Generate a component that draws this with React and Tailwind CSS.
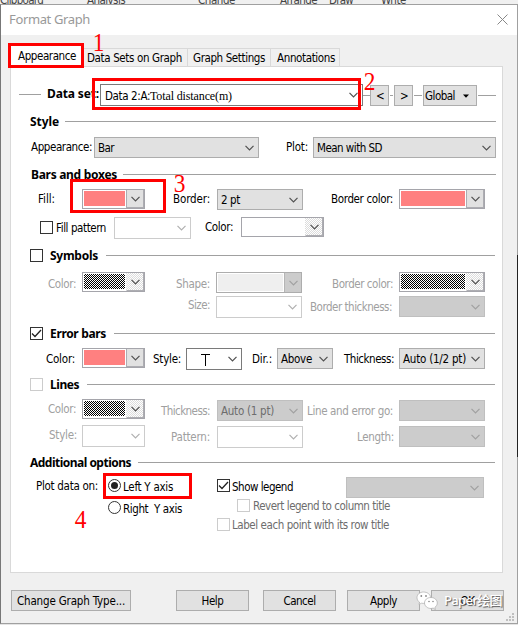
import { useLayoutEffect, useRef } from "react";

// Single-line label whose tracking is tuned so it fills the given width.
function T({ w, children, className = "" }) {
  const ref = useRef(null);
  useLayoutEffect(() => {
    const el = ref.current;
    el.style.letterSpacing = "0px";
    const natural = el.getBoundingClientRect().width;
    el.style.letterSpacing = (w - natural) / el.textContent.length + "px";
  }, [w, children]);
  return (
    <span className={"block h-[21px] shrink-0 leading-[21px] " + className} style={{ width: w }}>
      <span ref={ref} className="inline-block whitespace-pre">{children}</span>
    </span>
  );
}

// Bold section caption.
function Heading({ className = "", ...rest }) {
  return <T className={"font-['Noto_Sans',sans-serif] text-[12px] font-bold [font-stretch:normal] " + className} {...rest} />;
}

function Chevron({ className = "" }) {
  return (
    <svg width="9" height="6" viewBox="0 0 9 6" className={"shrink-0 " + className} fill="none" stroke="currentColor" strokeWidth="1.2">
      <path d="M.5 .8 4.5 4.8 8.5 .8" />
    </svg>
  );
}

const looks = {
  normal: "h-[21px] border-[#adadad] bg-[#e1e1e1] text-[#505050]",
  off: "h-[21px] border-[#bfbfbf] bg-[#cccccc] text-[#a0a0a0]",
  edit: "h-[22px] border-[#7a7a7a] bg-white text-[#505050]",
  editOff: "h-[22px] border-[#cccccc] bg-white text-[#b0b0b0]",
};

function Select({ look = "normal", className = "", children }) {
  return (
    <div className={"flex shrink-0 items-center justify-between border pr-1 pl-[3px] " + looks[look] + " " + className}>
      <div className="mt-[2px]">{children}</div>
      <Chevron />
    </div>
  );
}

const dither =
  "bg-[repeating-conic-gradient(#000_0_25%,#fff_0_50%)] bg-size-[2px_2px]";
const paleDither =
  "bg-[repeating-conic-gradient(#dcdcdc_0_25%,#fff_0_50%)] bg-size-[2px_2px]";

function Swatch({ className = "", fill = "bg-[#ff8080]", off = false }) {
  return (
    <div className={"flex h-5 shrink-0 border border-[#a5a5ab] bg-white " + className}>
      <div className={"m-px mb-[2px] flex-1 " + fill} />
      <div
        className={
          "flex w-[18px] items-center justify-center border-r border-b border-l border-[#adadb2] text-[#505050] " +
          (off ? "border-l-transparent " + paleDither : "bg-[#e1e1e1]")
        }
      >
        <Chevron />
      </div>
    </div>
  );
}

function Check({ on = false, off = false, className = "" }) {
  return (
    <div className={"h-[13px] w-[13px] shrink-0 border bg-white " + (off ? "border-[#cccccc] " : "border-[#333] ") + className}>
      {on && (
        <svg width="11" height="11" viewBox="0 0 11 11" fill="none" stroke="#222" strokeWidth="1.3">
          <path d="M1 5.5 4 8.5 10 2" />
        </svg>
      )}
    </div>
  );
}

function Radio({ on = false, className = "" }) {
  return (
    <div className={"flex h-[13px] w-[13px] shrink-0 items-center justify-center rounded-full border border-[#333] bg-white " + className}>
      {on && <div className="h-[7px] w-[7px] rounded-full bg-[#222]" />}
    </div>
  );
}

const Rule = ({ className }) => <div className={"h-px shrink-0 bg-[#a0a0a0] " + className} />;

function Button({ className = "", w, children }) {
  return (
    <button className={"flex h-[21px] shrink-0 items-center justify-center border border-[#adadad] bg-[#e1e1e1] " + className}>
      <T w={w} className="mt-[2px]">{children}</T>
    </button>
  );
}

const Digit = ({ className, children }) => (
  <div className={"absolute origin-center scale-x-90 font-['Liberation_Serif',serif] text-[26px] leading-[26px] text-[#ff0000] [font-stretch:normal] " + className}>{children}</div>
);

const gray = "text-[#a0a0a0]";

export default function App() {
  return (
    <div className="relative flex h-[625px] w-[518px] flex-col overflow-hidden bg-[#e4e4e4] font-['DejaVu_Sans_Condensed','DejaVu_Sans',sans-serif] text-[11.5px] text-black [font-stretch:condensed]">
      {/* Ribbon showing behind the dialog */}
      <div className="flex h-1 shrink-0 overflow-hidden bg-[#f0f0f0] text-[#444]">
        <T w={43} className="-mt-[10px]">Clipboard</T>
        <T w={38} className="-mt-[10px] ml-[44px]">Analysis</T>
        <T w={37} className="-mt-[10px] ml-[73px]">Change</T>
        <T w={37} className="-mt-[10px] ml-[45px]">Arrange</T>
        <T w={24} className="-mt-[10px] ml-[12px]">Draw</T>
        <T w={25} className="-mt-[10px] ml-[28px]">Write</T>
      </div>

      <div className="flex h-[620px] shrink-0 flex-col border border-[#a0a0a0] border-l-[#777] bg-[#f0f0f0]">
        <div className="flex h-[30px] shrink-0 justify-between bg-white">
          <T w={81} className="mt-[4px] ml-[8px] font-['Noto_Sans',sans-serif] text-[13px] text-[#999] [font-stretch:normal]">Format Graph</T>
          <svg width="11" height="11" viewBox="0 0 11 11" className="mt-[9px] mr-[9px]" stroke="#888" strokeWidth="1">
            <path d="M.5 .5 10.5 10.5M10.5 .5 .5 10.5" />
          </svg>
        </div>

        {/* Tabs */}
        <div className="flex h-[31px] shrink-0 items-end pl-[9px]">
          <div className="h-[22px] w-[74px] bg-white pl-[8px]"><T w={58} className="mt-[2px]">Appearance</T></div>
          <div className="h-[18px] w-[104px] border-t border-r border-[#d9d9d9] pl-[3px]"><T w={95} className="-mt-px">Data Sets on Graph</T></div>
          <div className="h-[18px] w-[83px] border-t border-r border-[#d9d9d9] pl-[5px]"><T w={72} className="-mt-px">Graph Settings</T></div>
          <div className="h-[18px] w-[69px] border-t border-r border-[#d9d9d9] pl-[6px]"><T w={58} className="-mt-px">Annotations</T></div>
        </div>

        <div className="ml-[9px] h-[507px] w-[493px] shrink-0 border border-[#d9d9d9] bg-white">
          {/* Data set */}
          <div className="mt-[17px] flex h-[27px]">
            <Rule className="mt-[10px] ml-[8px] w-[22px]" />
            <Heading w={52} className="ml-[6px] -mt-px">Data set:</Heading>
            <Select look="edit" className="ml-px w-[263px]">
              <div className="flex text-black">
                <T w={45} className="ml-px">Data 2:A:</T>
                <T w={82} className="font-['Liberation_Serif',serif] text-[12px] [font-stretch:normal]">Total distance(m)</T>
              </div>
            </Select>
            <Rule className="mt-[11px] w-[7px]" />
            <Button w={7} className="mt-px w-[19px]">&lt;</Button>
            <Rule className="mt-[11px] ml-px w-[3px]" />
            <Button w={7} className="mt-px ml-px w-[19px]">&gt;</Button>
            <Rule className="mt-[11px] ml-px w-[8px]" />
            <button className="mt-px ml-px flex h-[21px] w-[54px] shrink-0 items-center border border-[#adadad] bg-[#e1e1e1] pl-px">
              <T w={30} className="mt-[2px]">Global</T>
              <svg width="6" height="4" className="ml-[8px]"><path d="M0 .5H6L3 3.8Z" /></svg>
            </button>
            <Rule className="mt-[11px] ml-px w-[18px]" />
          </div>

          {/* Style */}
          <div className="flex h-[26px] items-start">
            <Heading w={29} className="ml-[19px]">Style</Heading>
            <Rule className="mt-[10px] ml-[6px] w-[431px]" />
          </div>
          <div className="flex h-[27px]">
            <T w={61} className="ml-[20px]">Appearance:</T>
            <Select className="ml-[2px] w-[165px]"><T w={16} className="text-black">Bar</T></Select>
            <T w={22} className="ml-[27px]">Plot:</T>
            <Select className="ml-[5px] w-[183px]"><T w={65} className="text-black">Mean with SD</T></Select>
          </div>

          {/* Bars and boxes */}
          <div className="flex h-[25px]">
            <Heading w={86} className="ml-[20px]">Bars and boxes</Heading>
            <Rule className="mt-[10px] ml-[6px] w-[373px]" />
          </div>
          <div className="flex h-[28px]">
            <T w={17} className="ml-[27px]">Fill:</T>
            <Swatch className="ml-[27px] w-[63px]" />
            <T w={37} className="ml-[28px]">Border:</T>
            <Select className="ml-[7px] w-[86px]"><T w={19} className="text-black">2 pt</T></Select>
            <T w={62} className="ml-[28px]">Border color:</T>
            <Swatch className="ml-[6px] w-[86px]" />
          </div>
          <div className="flex h-[28px]">
            <Check className="mt-[4px] ml-[29px]" />
            <T w={50} className="mt-px ml-[3px]">Fill pattern</T>
            <Select look="editOff" className="ml-[8px] w-[77px]" />
            <T w={28} className="ml-[14px]">Color:</T>
            <Swatch fill="bg-white" off className="ml-[8px] w-[83px]" />
          </div>

          {/* Symbols */}
          <div className="flex h-[27px]">
            <Check className="mt-[4px] ml-[19px]" />
            <Heading w={48} className="ml-[7px]">Symbols</Heading>
            <Rule className="mt-[10px] ml-[8px] w-[389px]" />
          </div>
          <div className={"flex h-[24px] " + gray}>
            <T w={28} className="mt-[2px] ml-[37px]">Color:</T>
            <Swatch fill={dither} off className="ml-[6px] w-[63px]" />
            <T w={34} className="mt-[2px] ml-[31px]">Shape:</T>
            <div className="ml-[6px] flex h-[21px] w-[86px] shrink-0 border border-[#adadad]">
              <div className="m-px flex-1 bg-[#efefef]" />
              <div className="flex w-[17px] items-center justify-center border-l border-[#b5b5b5] bg-[#cccccc]"><Chevron /></div>
            </div>
            <T w={61} className="mt-[2px] ml-[30px]">Border color:</T>
            <Swatch fill={dither} off className="ml-[6px] w-[86px]" />
          </div>
          <div className={"flex h-[31px] " + gray}>
            <T w={22} className="-mt-px ml-[177px]">Size:</T>
            <Select look="editOff" className="ml-[6px] w-[86px]" />
            <T w={82} className="mt-px ml-[8px]">Border thickness:</T>
            <Select look="off" className="ml-[7px] w-[86px]" />
          </div>

          {/* Error bars */}
          <div className="flex h-[21px]">
            <Check on className="ml-[19px]" />
            <Heading w={56} className="-mt-[4px] ml-[7px]">Error bars</Heading>
            <Rule className="mt-[6px] ml-[8px] w-[381px]" />
          </div>
          <div className="flex h-[30px]">
            <T w={29} className="mt-px ml-[35px]">Color:</T>
            <Swatch className="ml-[7px] w-[63px]" />
            <T w={28} className="mt-px ml-[8px]">Style:</T>
            <Select look="edit" className="ml-[5px] w-[56px]">
              <svg width="10" height="14" className="-mt-px ml-[10px]" stroke="#000"><path d="M1 1.5H10M5.5 1.5V13" /></svg>
            </Select>
            <T w={20} className="mt-px ml-[10px]">Dir.:</T>
            <Select className="ml-[5px] w-[56px]"><T w={31} className="text-black">Above</T></Select>
            <T w={50} className="mt-px ml-[11px]">Thickness:</T>
            <Select className="ml-[5px] w-[86px]"><T w={63} className="text-black">Auto (1/2 pt)</T></Select>
          </div>

          {/* Lines */}
          <div className="flex h-[21px]">
            <Check off className="ml-[19px]" />
            <Heading w={29} className="-mt-[4px] ml-[7px]">Lines</Heading>
            <Rule className="mt-[6px] ml-[8px] w-[408px]" />
          </div>
          <div className={"flex h-[26px] " + gray}>
            <T w={28} className="ml-[37px]">Color:</T>
            <Swatch fill={dither} off className="ml-[6px] w-[63px]" />
            <T w={49} className="mt-[2px] ml-[16px]">Thickness:</T>
            <Select look="off" className="mt-px ml-[7px] w-[86px]"><T w={53} className="text-[#6d6d6d]">Auto (1 pt)</T></Select>
            <T w={86} className="mt-[2px] ml-[4px]">Line and error go:</T>
            <Select look="off" className="mt-px ml-[6px] w-[86px]" />
          </div>
          <div className={"flex h-[27px] " + gray}>
            <T w={28} className="ml-[38px]">Style:</T>
            <Select look="editOff" className="ml-[5px] w-[63px]" />
            <T w={39} className="mt-[2px] ml-[26px]">Pattern:</T>
            <Select look="editOff" className="mt-px ml-[7px] w-[86px]" />
            <T w={37} className="mt-[2px] ml-[54px]">Length:</T>
            <Select look="off" className="mt-px ml-[5px] w-[86px]" />
          </div>

          {/* Additional options */}
          <div className="flex h-[25px]">
            <Heading w={101} className="ml-[19px]">Additional options</Heading>
            <Rule className="mt-[10px] ml-[7px] w-[357px]" />
          </div>
          <div className="flex h-[22px]">
            <T w={62} className="-mt-px ml-[25px]">Plot data on:</T>
            <Radio on className="mt-[2px] ml-[10px]" />
            <T w={50} className="ml-[2px]">Left Y axis</T>
            <Check on className="mt-[2px] ml-[44px]" />
            <T w={61} className="ml-[2px]">Show legend</T>
            <Select look="off" className="ml-[53px] w-[138px]" />
          </div>
          <div className="flex h-[19px]">
            <Radio className="mt-[2px] ml-[97px]" />
            <T w={59} className="ml-[2px]">{"Right  Y axis"}</T>
            <Check off className="ml-[55px]" />
            <T w={137} className="-mt-[3px] ml-[3px] text-[#6d6d6d]">Revert legend to column title</T>
          </div>
          <div className="flex">
            <Check off className="ml-[206px]" />
            <T w={157} className="-mt-[3px] ml-[2px] text-[#6d6d6d]">Label each point with its row title</T>
          </div>
        </div>

        {/* Footer buttons */}
        <div className="mt-[17px] flex pl-[10px]">
          <Button w={108} className="w-[120px]">Change Graph Type...</Button>
          <Button w={22} className="ml-[45px] w-[73px]">Help</Button>
          <Button w={32} className="ml-[14px] w-[73px]">Cancel</Button>
          <Button w={27} className="ml-[11px] w-[73px]">Apply</Button>
          <Button w={14} className="ml-[11px] w-[73px]">OK</Button>
        </div>
      </div>

      {/* Window edge beside the dialog */}
      <div className="absolute top-[255px] right-0 h-[202px] w-px bg-[#222]" />

      {/* Resize grip */}
      <svg width="10" height="10" className="absolute top-[612px] left-[505px]" fill="#bfbfbf">
        <path d="M7 1h2v2H7zM4 4h2v2H4zM7 4h2v2H7zM1 7h2v2H1zM4 7h2v2H4zM7 7h2v2H7z" />
      </svg>

      {/* Red callouts */}
      <div className="absolute top-[43px] left-[8px] h-[25px] w-[76px] border-3 border-[#ff0000]" />
      <div className="absolute top-[78px] left-[92px] h-[32px] w-[269px] border-3 border-[#ff0000]" />
      <div className="absolute top-[179px] left-[70px] h-[34px] w-[96px] border-3 border-[#ff0000]" />
      <div className="absolute top-[473px] left-[103px] h-[26px] w-[89px] border-3 border-[#ff0000]" />
      <Digit className="top-[30px] left-[92px]">1</Digit>
      <Digit className="top-[69px] left-[363px]">2</Digit>
      <Digit className="top-[171px] left-[173px]">3</Digit>
      <Digit className="top-[507px] left-[74px]">4</Digit>

      {/* Watermark */}
      <div className="absolute top-[590px] left-[416px] flex items-center text-white">
        <svg width="23" height="21" viewBox="0 0 23 21" fill="#fff" stroke="#aaa" strokeWidth=".7">
          <path d="M7.5 2C3.700 2 1 4.500 1 7.700c0 2 1 3.500 2.500 4.500L3 14.500l2.500-1.300c5 1 9-1.500 9-5.500C14.500 4.500 11.500 2 7.500 2Z" />
          <path d="M15 7.500c-4 0-6.500 2.500-6.500 5.500s3 5.500 6.500 5.500l2.200-.4 2.200 1.400-.5-2.200c1.400-1 2.400-2.500 2.400-4.300 0-3-2.800-5.500-6.300-5.500Z" />
          <g fill="#888" stroke="none">
            <circle cx="5.300" cy="6" r=".9" /><circle cx="10" cy="6" r=".9" />
            <circle cx="13" cy="11.500" r=".8" /><circle cx="17" cy="11.500" r=".8" />
          </g>
        </svg>
        <T w={58} className="ml-[5px] font-['Noto_Sans','Noto_Sans_CJK_SC',sans-serif] text-[13px] font-medium [font-stretch:normal] [text-shadow:1px_1px_1px_#555]">Paper绘图</T>
      </div>
    </div>
  );
}
